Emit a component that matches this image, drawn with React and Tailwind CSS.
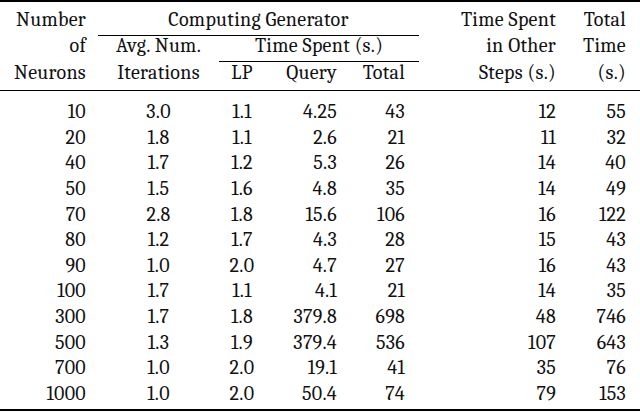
const rows = [
  ["10", "3.0", "1.1", "4.25", "43", "12", "55"],
  ["20", "1.8", "1.1", "2.6", "21", "11", "32"],
  ["40", "1.7", "1.2", "5.3", "26", "14", "40"],
  ["50", "1.5", "1.6", "4.8", "35", "14", "49"],
  ["70", "2.8", "1.8", "15.6", "106", "16", "122"],
  ["80", "1.2", "1.7", "4.3", "28", "15", "43"],
  ["90", "1.0", "2.0", "4.7", "27", "16", "43"],
  ["100", "1.7", "1.1", "4.1", "21", "14", "35"],
  ["300", "1.7", "1.8", "379.8", "698", "48", "746"],
  ["500", "1.3", "1.9", "379.4", "536", "107", "643"],
  ["700", "1.0", "2.0", "19.1", "41", "35", "76"],
  ["1000", "1.0", "2.0", "50.4", "74", "79", "153"],
];

const cols = "grid grid-cols-[98px_121px_46px_80px_74px_149px_72px]";

const App = () => {
  return (
    <div className="w-[640px] h-[412px] bg-white text-[#111] text-[20px] tracking-[0.3px] font-serif [font-family:Liberation_Serif,serif] whitespace-nowrap">
      {/* Top rule */}
      <div className="h-[2px] bg-black" />

      {/* Header row 1 */}
      <div className={`${cols} h-[33px] leading-[30px]`}>
        <div className="text-right pr-[12px] pt-[3px]">Number</div>
        <div className="col-span-4 text-center pt-[3px] border-b border-black">Computing Generator</div>
        <div className="text-right pr-[12px] pt-[3px]">Time Spent</div>
        <div className="text-right pr-[14px] pt-[3px]">Total</div>
      </div>

      {/* Header row 2 */}
      <div className={`${cols} h-[27px] leading-[22px]`}>
        <div className="text-right pr-[12px]">of</div>
        <div className="text-center">Avg. Num.</div>
        <div className="col-span-3 text-center border-b border-black">Time Spent (s.)</div>
        <div className="text-right pr-[12px]">in Other</div>
        <div className="text-right pr-[14px]">Time</div>
      </div>

      {/* Header row 3 */}
      <div className={`${cols} h-[29px] leading-[22px] border-b border-black`}>
        <div className="text-right pr-[12px]">Neurons</div>
        <div className="text-center">Iterations</div>
        <div className="text-center">LP</div>
        <div className="text-right pr-[8px]">Query</div>
        <div className="text-right pr-[14px]">Total</div>
        <div className="text-right pr-[12px]">Steps (s.)</div>
        <div className="text-right pr-[14px]">(s.)</div>
      </div>

      {/* Body */}
      <div className="pt-[8px] pb-[2px] border-b-2 border-black">
        {rows.map((r) => (
          <div key={r[0]} className={`${cols} h-[25.65px] leading-[25.65px]`}>
            <div className="text-right pr-[12px]">{r[0]}</div>
            <div className="text-center">{r[1]}</div>
            <div className="text-center">{r[2]}</div>
            <div className="text-right pr-[8px]">{r[3]}</div>
            <div className="text-right pr-[14px]">{r[4]}</div>
            <div className="text-right pr-[12px]">{r[5]}</div>
            <div className="text-right pr-[14px]">{r[6]}</div>
          </div>
        ))}
      </div>
    </div>
  );
};

export default App;
